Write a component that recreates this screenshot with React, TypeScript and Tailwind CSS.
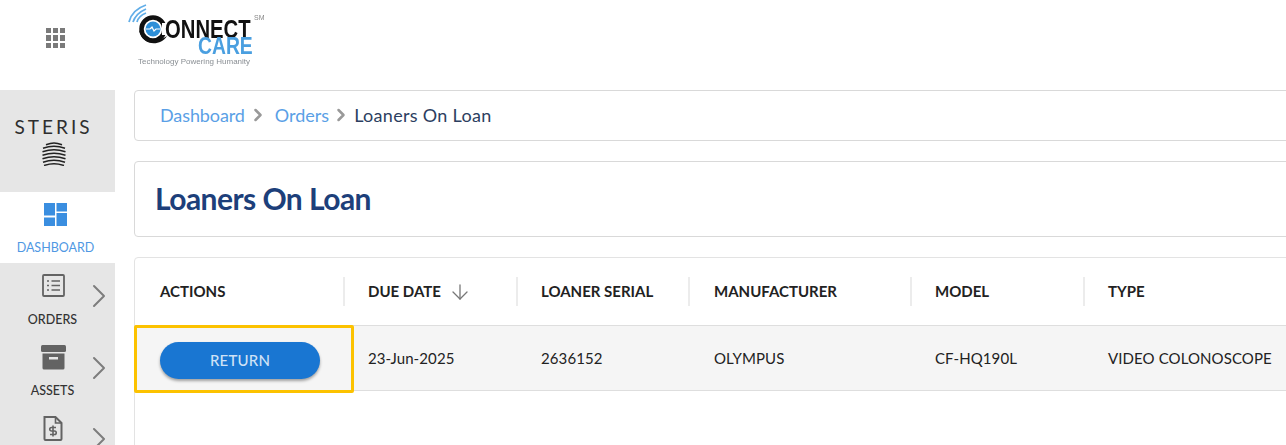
import type { ReactNode } from 'react';
import { ChevronRight, ArrowDown } from 'lucide-react';

const lato = 'font-["Lato","Noto_Sans",sans-serif]';

const columns = [
  { title: 'ACTIONS', cell: 'w-[210px] pl-[25px]' },
  { title: 'DUE DATE', cell: 'w-[173px] pl-[23px]', sorted: true },
  { title: 'LOANER SERIAL', cell: 'w-[172px] pl-[23px]' },
  { title: 'MANUFACTURER', cell: 'w-[222px] pl-[24px]' },
  { title: 'MODEL', cell: 'w-[173px] pl-[23px]' },
  { title: 'TYPE', cell: 'w-[250px] pl-[23px]' },
];

const row = ['23-Jun-2025', '2636152', 'OLYMPUS', 'CF-HQ190L', 'VIDEO COLONOSCOPE'];

function Logo() {
  return (
    <div className="relative h-[68px] w-[140px] blur-[0.4px]">
      <svg className="absolute left-0 top-0" width="48" height="48" viewBox="0 0 48 48" fill="none">
        <g stroke="#62aee8" strokeWidth="1.800">
          <path d="M1 20 C3 12 9 6 18 3" />
          <path d="M5 20 C7 14 11 10 18 7" />
          <path d="M9 20 C10 16 13 13 18 11" />
        </g>
        <circle cx="25" cy="27" r="11.500" stroke="#111" strokeWidth="4.500" />
        <rect x="34" y="21" width="9" height="12" fill="#fff" />
        <circle cx="25" cy="27" r="7.500" fill="#2d8fd8" />
        <path d="M18 27 H22 L24 25 L26 29 L28 27 H32" stroke="#fff" strokeWidth="1.200" />
        <path d="M11 28 C14 44 32 45 39 34 C31 40 20 39 11 28 Z" fill="#111" />
      </svg>
      <div className="absolute left-[37px] top-[18px] origin-left scale-x-[0.81] whitespace-nowrap font-['Liberation_Sans',sans-serif] text-[25px] font-bold leading-[18px] text-[#111]">
        ONNECT
      </div>
      <div className="absolute left-[126px] top-[12px] font-['Liberation_Sans',sans-serif] text-[7px] leading-[8px] text-[#888]">
        SM
      </div>
      <div className="absolute left-[70px] top-[36px] origin-left scale-x-[0.84] whitespace-nowrap font-['Liberation_Sans',sans-serif] text-[23px] font-bold leading-[17px] text-[#4a9fe0]">
        CARE
      </div>
      <div className="absolute left-[10px] top-[55px] whitespace-nowrap font-['Liberation_Sans',sans-serif] text-[8px] leading-[9px] text-[#8a8f94]">
        Technology Powering Humanity
      </div>
    </div>
  );
}

function AppsIcon() {
  return (
    <div className="grid grid-cols-3 gap-[2px]">
      {Array.from({ length: 9 }).map((_, i) => (
        <div key={i} className="h-[5.300px] w-[5.300px] bg-[#7a7a7a]" />
      ))}
    </div>
  );
}

function SterisMark() {
  return (
    <svg width="26" height="24" viewBox="0 0 26 24" fill="none" stroke="#222" strokeWidth="1.500" className="block">
      <path d="M5 2.800 C9 1.200 11 1 13 1 C15 1 17 1.200 21 2.800" />
      <path d="M2 6.300 C7 4.500 10 4.300 13 4.300 C16 4.300 19 4.500 24 6.300" />
      <path d="M1.500 9.800 C7 8 10 7.800 13 7.800 C16 7.800 19 8 24.500 9.800" />
      <path d="M1.500 13.300 C7 11.500 10 11.300 13 11.300 C16 11.300 19 11.500 24.500 13.300" />
      <path d="M1.500 16.800 C7 15 10 14.800 13 14.800 C16 14.800 19 15 24.500 16.800" />
      <path d="M2 20.300 C7 18.500 10 18.300 13 18.300 C16 18.300 19 18.500 24 20.300" />
      <path d="M3 23.500 C8 22 10 21.800 13 21.800 C16 21.800 18 22 23 23.500" />
    </svg>
  );
}

function DashboardIcon() {
  return (
    <svg width="23" height="23" viewBox="0 0 23 23" fill="#3a8ee0" className="block">
      <rect x="0" y="0" width="11" height="12.500" />
      <rect x="12.500" y="0" width="10.500" height="8.500" />
      <rect x="0" y="14.500" width="11" height="8.500" />
      <rect x="12.500" y="10" width="10.500" height="13" />
    </svg>
  );
}

function OrdersIcon() {
  return (
    <svg width="23" height="23" viewBox="0 0 23 23" fill="none" stroke="#636363">
      <rect x="1" y="1" width="21" height="21" rx="1" strokeWidth="1.800" />
      <path d="M5 7 H7 M9.500 7 H18 M5 11.500 H7 M9.500 11.500 H18 M5 16 H7 M9.500 16 H18" strokeWidth="1.600" />
    </svg>
  );
}

function AssetsIcon() {
  return (
    <svg width="25" height="25" viewBox="0 0 25 25" fill="#636363">
      <rect x="0" y="0" width="25" height="7" rx="1.500" />
      <path d="M1.500 8.500 H23.500 V23 a1.500 1.500 0 0 1 -1.500 1.500 H3 a1.500 1.500 0 0 1 -1.500 -1.500 Z" />
      <rect x="8" y="12" width="9" height="2.500" fill="#e6e6e6" />
    </svg>
  );
}

function BillingIcon() {
  return (
    <svg width="20" height="25" viewBox="0 0 20 25" fill="none" stroke="#636363">
      <path d="M1.500 1 H12.500 L18.500 7 V23 a1 1 0 0 1 -1 1 H2.500 a1 1 0 0 1 -1 -1 Z" strokeWidth="2" />
      <path d="M12.500 1 V7 H18.500" strokeWidth="1.600" />
      <path d="M13 11.500 H8.500 a1.700 1.700 0 0 0 0 3.500 H11.500 a1.700 1.700 0 0 1 0 3.500 H7 M10 9.500 V20.500" strokeWidth="1.600" />
    </svg>
  );
}

function NavItem({ icon, label, className }: { icon: ReactNode; label?: string; className: string }) {
  return (
    <div className={`relative flex w-full shrink-0 flex-col items-center ${className}`}>
      <div className="mr-[9px] flex h-[25px] items-center justify-center">{icon}</div>
      {label && (
        <div className="mr-[10px] mt-[14.500px] text-[12.500px] font-medium leading-[14px] text-[#333]">{label}</div>
      )}
      <ChevronRight className="absolute left-[79px] top-[3px] text-[#7d7d7d]" size={40} strokeWidth={1.200} />
    </div>
  );
}

function Sidebar() {
  return (
    <div className="flex h-[445px] w-[115px] shrink-0 flex-col overflow-hidden">
      <div className="flex h-[90px] shrink-0 items-start justify-center pt-[28px]">
        <div className="mr-[4px]">
          <AppsIcon />
        </div>
      </div>
      <div className="flex h-[102px] shrink-0 flex-col items-center bg-[#e6e6e6] pt-[25px]">
        <div className="mr-[8px] text-[19px] leading-[24px] tracking-[3px] text-[#2e2e2e]">STERIS</div>
        <div className="mr-[8px] mt-[3px]">
          <SterisMark />
        </div>
      </div>
      <div className="flex h-[71px] shrink-0 flex-col items-center pt-[11px]">
        <div className="mr-[4px]">
          <DashboardIcon />
        </div>
        <div className="mr-[4px] mt-[15px] text-[12.500px] leading-[14px] text-[#4f98e3]">DASHBOARD</div>
      </div>
      <div className="flex flex-1 flex-col bg-[#e6e6e6] pt-[10px]">
        <NavItem icon={<OrdersIcon />} label="ORDERS" className="h-[71.500px]" />
        <NavItem icon={<AssetsIcon />} label="ASSETS" className="h-[71.500px]" />
        <NavItem icon={<BillingIcon />} className="h-[40px]" />
      </div>
    </div>
  );
}

function Breadcrumb() {
  return (
    <div className="flex h-[51px] w-[1200px] shrink-0 items-center rounded-l-[4px] border border-[#d9d9d9] bg-white pl-[25px] text-[18px]">
      <span className="tracking-[-0.100px] text-[#5a9fe6]">Dashboard</span>
      <ChevronRight className="ml-[3px] mt-[-2px] text-[#999]" size={20} strokeWidth={3} />
      <span className="ml-[7px] text-[#5a9fe6]">Orders</span>
      <ChevronRight className="ml-[2px] mt-[-2px] text-[#999]" size={20} strokeWidth={3} />
      <span className="ml-[3px] tracking-[0.300px] text-[#2c3e60]">Loaners On Loan</span>
    </div>
  );
}

function LoanTable() {
  return (
    <div className="h-[260px] w-[1200px] rounded-l-[4px] border border-[#e3e3e3] bg-white">
      <div className="flex h-[67px] items-center">
        {columns.map((col, i) => (
          <div key={col.title} className={`flex h-[29px] shrink-0 items-center ${col.cell} ${i < 5 ? 'border-r-2 border-[#ececec]' : ''}`}>
            <span className="text-[15px] font-bold text-[#222]">{col.title}</span>
            {col.sorted && <ArrowDown className="ml-[7px] text-[#777]" size={24} strokeWidth={1.300} />}
          </div>
        ))}
      </div>
      <div className="flex h-[66px] items-center border-y border-[#dedede] bg-[#f5f5f5]">
        <div className={`flex h-full shrink-0 items-center ${columns[0].cell}`}>
          <button className="mt-[5px] h-[37px] w-[160px] rounded-full bg-[#1976d2] text-[15px] font-medium tracking-[0.200px] text-[#cfe2f6] shadow-[0_2px_3px_rgba(0,0,0,0.35)]">
            RETURN
          </button>
        </div>
        {row.map((cell, i) => (
          <div key={cell} className={`shrink-0 pt-[1px] text-[15px] tracking-[0.100px] text-[#222] ${columns[i + 1].cell}`}>
            {cell}
          </div>
        ))}
      </div>
    </div>
  );
}

export default function App() {
  return (
    <div className={`relative flex h-[445px] w-[1286px] overflow-hidden bg-white ${lato}`}>
      <Sidebar />
      <div className="flex h-[445px] min-w-0 flex-1 flex-col overflow-hidden pl-[19px]">
        <div className="h-[90px] shrink-0">
          <div className="ml-[-6px] pt-[2px]">
            <Logo />
          </div>
        </div>
        <Breadcrumb />
        <div className="mt-[20px] flex h-[76px] w-[1200px] shrink-0 items-center rounded-l-[4px] border border-[#d9d9d9] bg-white pb-[2px] pl-[20px]">
          <h1 className="text-[30px] font-bold tracking-[-0.550px] text-[#1d3f7a]">Loaners On Loan</h1>
        </div>
        <div className="mt-[20px] shrink-0">
          <LoanTable />
        </div>
      </div>
      <div className="absolute left-[134px] top-[325px] h-[68px] w-[220px] rounded-[2px] border-[3.500px] border-[#fcc200]" />
    </div>
  );
}
